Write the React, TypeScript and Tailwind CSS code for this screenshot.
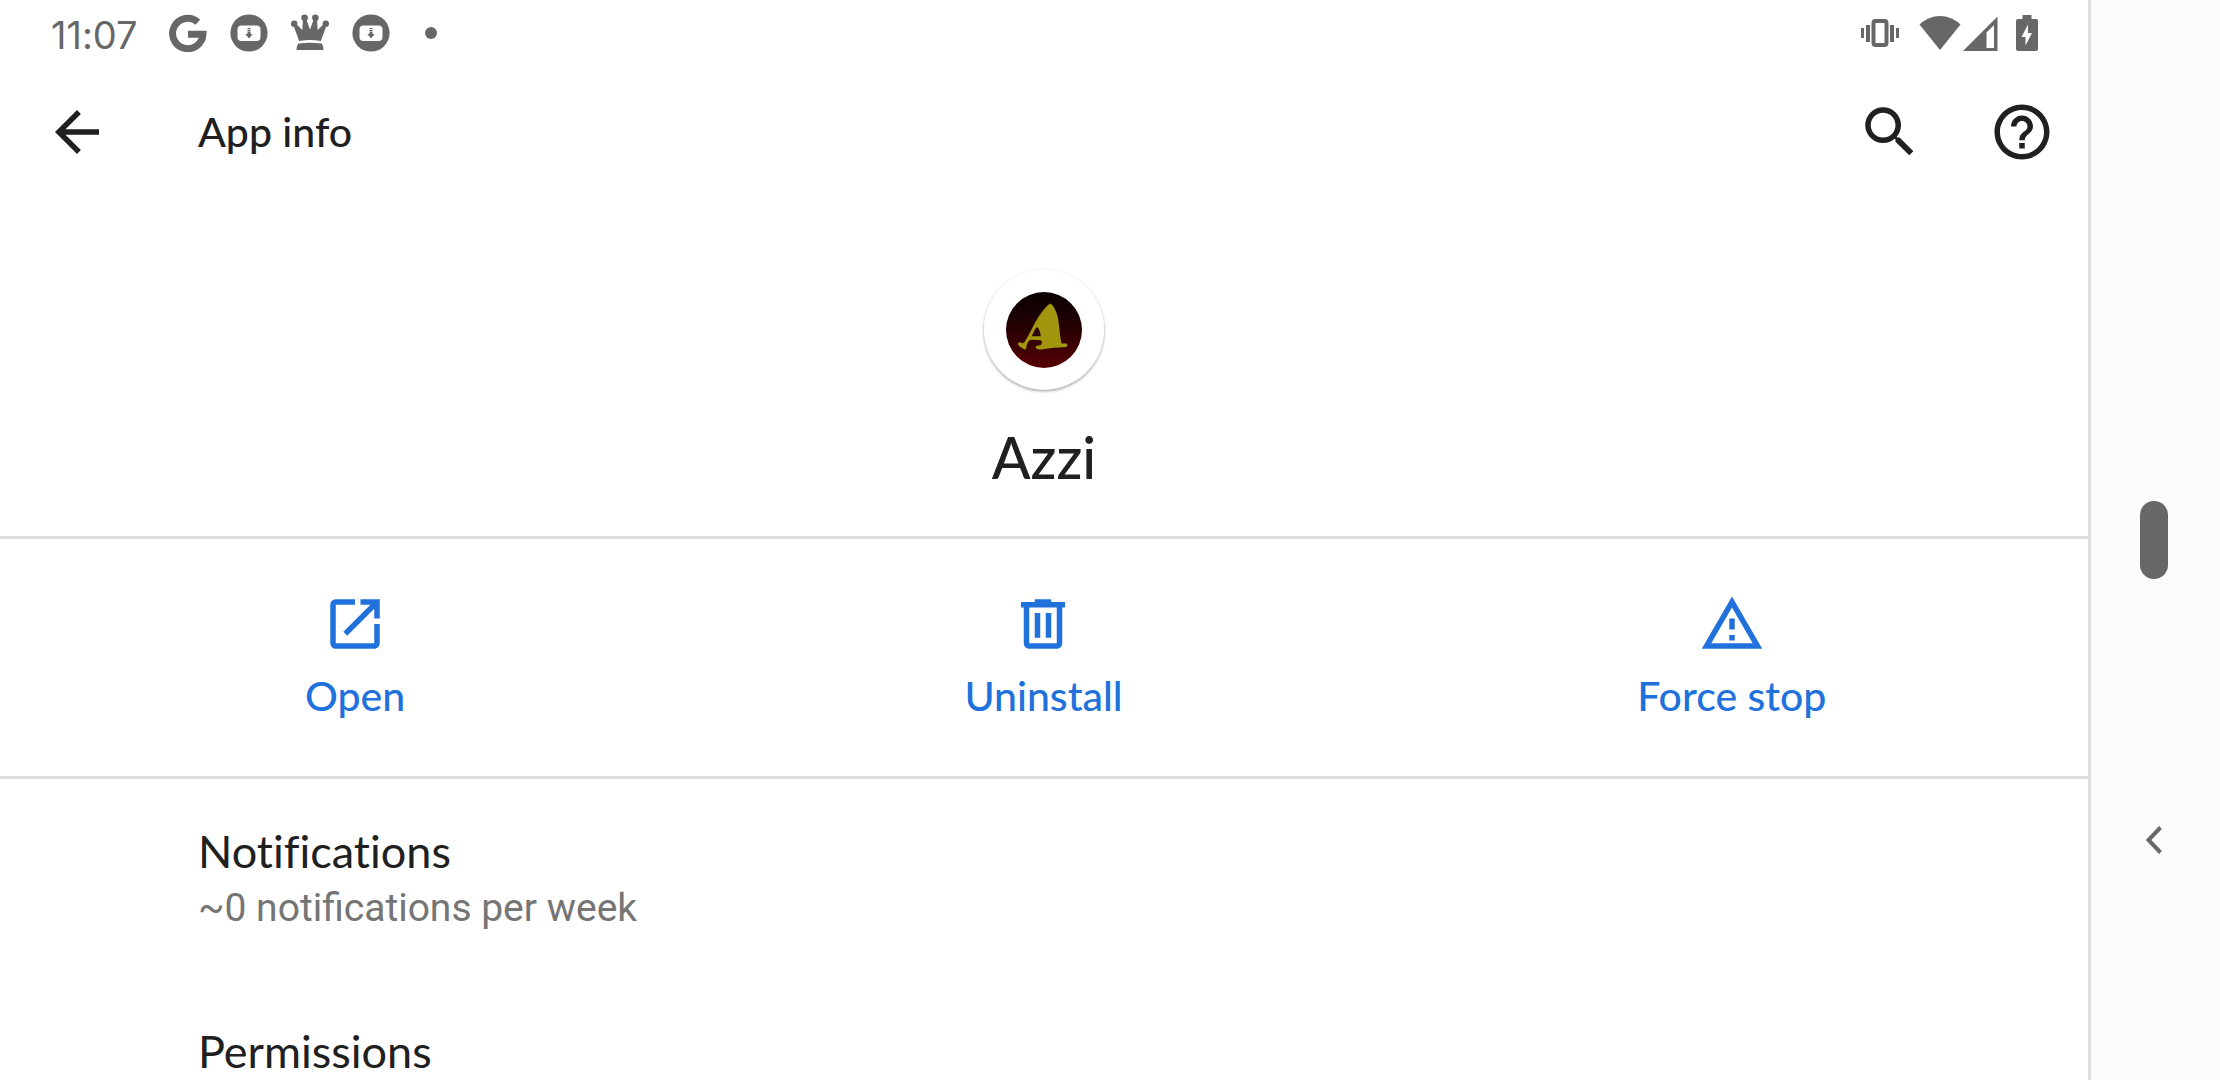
import type { ReactNode } from "react";

function MaterialIcon({ d, className = "size-[66px]" }: { d: string; className?: string }) {
  return (
    <svg viewBox="0 0 24 24" className={className} fill="currentColor" aria-hidden="true">
      <path fillRule="evenodd" d={d} />
    </svg>
  );
}

const paths = {
  back: "M20 11H7.83l5.59-5.59L12 4l-8 8 8 8 1.41-1.41L7.83 13H20v-2z",
  search:
    "M15.5 14h-.79l-.28-.27A6.471 6.471 0 0 0 16 9.5 6.5 6.5 0 1 0 9.5 16c1.61 0 3.09-.59 4.23-1.57l.27.28v.79l5 4.99L20.49 19l-4.99-5zm-6 0C7.01 14 5 11.99 5 9.5S7.01 5 9.5 5 14 7.01 14 9.5 11.99 14 9.5 14z",
  help: "M11 18h2v-2h-2v2zm1-16C6.48 2 2 6.48 2 12s4.48 10 10 10 10-4.48 10-10S17.52 2 12 2zm0 18c-4.41 0-8-3.59-8-8s3.59-8 8-8 8 3.59 8 8-3.59 8-8 8zm0-14c-2.21 0-4 1.79-4 4h2c0-1.1.9-2 2-2s2 .9 2 2c0 2-3 1.75-3 5h2c0-2.25 3-2.5 3-5 0-2.21-1.79-4-4-4z",
  open: "M19 19H5V5h7V3H5a2 2 0 0 0-2 2v14a2 2 0 0 0 2 2h14c1.1 0 2-.9 2-2v-7h-2v7zM14 3v2h3.59l-9.83 9.83 1.41 1.41L19 6.41V10h2V3h-7z",
  uninstall: "M15 4V3H9v1H4v2h1v13c0 1.1.9 2 2 2h10c1.1 0 2-.9 2-2V6h1V4h-5zm2 15H7V6h10v13zM9 8h2v9H9zM13 8h2v9h-2z",
  forceStop: "M12 5.99 19.53 19H4.47L12 5.99M12 2 1 21h22L12 2zM13 16h-2v2h2v-2zM13 10h-2v4h2v-4z",
};

function GoogleIcon() {
  return (
    <svg viewBox="0 0 38 38" className="size-[38px]" fill="none" stroke="currentColor" strokeWidth="7" aria-hidden="true">
      <path d="M28.9 8.1A15.2 15.2 0 1 0 34 20.2H19" />
    </svg>
  );
}

function DownloadIcon() {
  return (
    <svg viewBox="0 0 38 38" className="size-[38px]" aria-hidden="true">
      <circle cx="19" cy="19" r="18.6" fill="currentColor" />
      <rect x="7.5" y="11.5" width="23" height="15.5" rx="4" fill="white" />
      <path d="M17.5 14h3v1.2h-3zM17.5 16h3v1h-3zM17.5 17.6h3V20h2.2L19 24.4 15.3 20h2.2z" fill="currentColor" />
    </svg>
  );
}

function CrownIcon() {
  return (
    <svg viewBox="0 0 38 38" className="size-[38px]" fill="currentColor" aria-hidden="true">
      <circle cx="3.2" cy="9.8" r="3.2" />
      <circle cx="13.6" cy="3.8" r="3.3" />
      <circle cx="24.4" cy="3.8" r="3.3" />
      <circle cx="34.8" cy="9.8" r="3.2" />
      <path d="M2.5 11.500 5 9.800 11.300 16 12 5h3.200L19 15.500 22.800 5H26l.7 11L33 9.800l2.500 1.700L29.800 27Q19 25 8.200 27z" />
      <path d="M7.500 29.500Q19 28 30.500 29.500 32.300 31 32.500 36h-27Q5.700 31 7.500 29.500z" />
    </svg>
  );
}

function VibrateIcon() {
  return (
    <svg viewBox="0 0 38 38" className="size-[38px]" aria-hidden="true">
      <rect x="12.5" y="7" width="13" height="24" rx="2" fill="none" stroke="currentColor" strokeWidth="4" />
      <path d="M0 14h3v10H0zM5 11h4v17H5zM29 11h4v17h-4zM35 14h3v10h-3z" fill="currentColor" />
    </svg>
  );
}

function WifiIcon() {
  return (
    <svg viewBox="0 0 42 36" className="h-9 w-[42px]" fill="currentColor" aria-hidden="true">
      <path d="M21 35 .5 9.500Q9.500 1 21 1t20.500 8.500z" />
    </svg>
  );
}

function SignalIcon() {
  return (
    <svg viewBox="0 0 36 36" className="size-9" fill="currentColor" aria-hidden="true">
      <path fillRule="evenodd" d="M1 36 35.500 1.500V36zM24.500 17.500V33H32V10z" />
    </svg>
  );
}

function BatteryIcon() {
  return (
    <svg viewBox="0 0 22 36" className="h-9 w-[22px]" fill="currentColor" aria-hidden="true">
      <path fillRule="evenodd" d="M6.500 0h9v4H20q2 0 2 2v28q0 2-2 2H2q-2 0-2-2V6q0-2 2-2h4.500zM12 9.500 5.500 22h4v8.500L16 18h-4z" />
    </svg>
  );
}

function AzziLogo() {
  return (
    <svg viewBox="0 0 168 160" className="h-[160px] w-[168px]" role="img" aria-label="Azzi">
      <defs>
        <linearGradient id="logo-fill" x1="0" y1="0" x2="0" y2="1">
          <stop offset="0" stopColor="#080000" />
          <stop offset="0.4" stopColor="#200003" />
          <stop offset="1" stopColor="#560003" />
        </linearGradient>
        <filter id="logo-shadow" x="-20%" y="-20%" width="140%" height="140%">
          <feDropShadow dx="0" dy="1.500" stdDeviation="1.500" floodColor="#000" floodOpacity="0.4" />
        </filter>
      </defs>
      <circle cx="84" cy="79.5" r="60" fill="white" filter="url(#logo-shadow)" />
      <circle cx="84" cy="80" r="38" fill="url(#logo-fill)" />
      <path
        fillRule="evenodd"
        fill="#a3960f"
        d="M90.500 53.500C94 56 96.500 62 98 68C99.500 76 99.500 85 101.500 93.500L106.500 93.500C108 94.500 107.500 96.500 106 97C97 97.500 89 98 83 99.300C79 100 76 99 75.700 97.500C75.500 95.500 78 95.500 80.500 95.200C82.500 93.500 82.500 91 80.500 90.300L70.500 89.800C68.500 91 67.500 93 66.800 95C66.500 97.500 65.800 99.500 64.500 99.500C62.500 98.500 59.500 96.500 58.300 95C57.500 93 59 92 60.500 92.500C62 93.500 63.500 93.500 65 91.500C69 85 73 76 77.500 68.500C81.500 62 87 55 90.500 53.500ZM77 77C75 79 73 83 71.800 86.300L80.800 86.300C80.500 83 79.500 79 77 77Z"
      />
    </svg>
  );
}

function Action({ label, children }: { label: string; children: ReactNode }) {
  return (
    <button type="button" className="flex flex-col items-center gap-3 text-[41px] leading-[54px] font-medium">
      {children}
      <span>{label}</span>
    </button>
  );
}

export default function App() {
  return (
    <div className="flex h-screen overflow-hidden bg-white font-['Lato',sans-serif] text-[#202020] [font-variant-ligatures:none]">
      <div className="flex min-w-0 flex-1 flex-col">
        <div className="flex h-[66px] shrink-0 items-center justify-between pr-[50px] pl-[51px] text-[#676767]">
          <div className="flex items-center gap-[23px]">
            <time className="mr-2 pt-1 font-['Inter',sans-serif] text-[38px] leading-[62px]">11:07</time>
            <GoogleIcon />
            <DownloadIcon />
            <CrownIcon />
            <DownloadIcon />
            <span className="ml-3 size-3 rounded-full bg-current" />
          </div>
          <div className="flex items-center">
            <VibrateIcon />
            <span className="ml-5 flex gap-px">
              <WifiIcon />
              <SignalIcon />
            </span>
            <span className="ml-[18px]">
              <BatteryIcon />
            </span>
          </div>
        </div>

        <header className="flex h-[132px] shrink-0 items-center pr-[33px] pl-11">
          <button type="button" aria-label="Back">
            <MaterialIcon d={paths.back} />
          </button>
          <h1 className="ml-[88px] flex-1 text-[41px] leading-[54px] font-medium">App info</h1>
          <div className="flex gap-[66px]">
            <button type="button" aria-label="Search">
              <MaterialIcon d={paths.search} />
            </button>
            <button type="button" aria-label="Help">
              <MaterialIcon d={paths.help} />
            </button>
          </div>
        </header>

        <main className="flex flex-col">
          <section className="flex flex-col items-center border-b-[3px] border-[#dcdcdc] pt-[52px] pb-[44px]">
            <AzziLogo />
            <h2 className="mt-3 text-[57px] leading-[70px] font-medium">Azzi</h2>
          </section>

          <section className="grid grid-cols-3 border-b-[3px] border-[#dcdcdc] pt-[52px] pr-3 pb-[53px] pl-[11px] text-[#2071dc]">
            <Action label="Open">
              <MaterialIcon d={paths.open} />
            </Action>
            <Action label="Uninstall">
              <MaterialIcon d={paths.uninstall} />
            </Action>
            <Action label="Force stop">
              <MaterialIcon d={paths.forceStop} />
            </Action>
          </section>

          <button type="button" className="flex flex-col pt-[42px] pl-[198px] text-left">
            <span className="text-[45px] leading-[60px]">Notifications</span>
            <span className="font-['Roboto',sans-serif] text-[39px] leading-[54px] text-[#757575] [font-variant-ligatures:normal]">
              ~0 notifications per week
            </span>
          </button>
          <button type="button" className="pt-[86px] pl-[198px] text-left text-[45px] leading-[60px]">
            Permissions
          </button>
        </main>
      </div>

      <nav
        aria-label="System navigation"
        className="grid w-[132px] shrink-0 grid-rows-[1fr_78px_1fr] justify-items-center border-l-[3px] border-[#dedede] bg-[#fbfbfb] pr-1 text-[#676767]"
      >
        <span />
        <button type="button" aria-label="Home" className="w-7 rounded-full bg-current" />
        <button type="button" aria-label="Back" className="mt-5 self-center">
          <svg viewBox="0 0 16 28" className="h-7 w-4" fill="none" stroke="currentColor" strokeWidth="4" aria-hidden="true">
            <path d="M14.500 1.500 2.500 14l12 12.500" />
          </svg>
        </button>
      </nav>
    </div>
  );
}
